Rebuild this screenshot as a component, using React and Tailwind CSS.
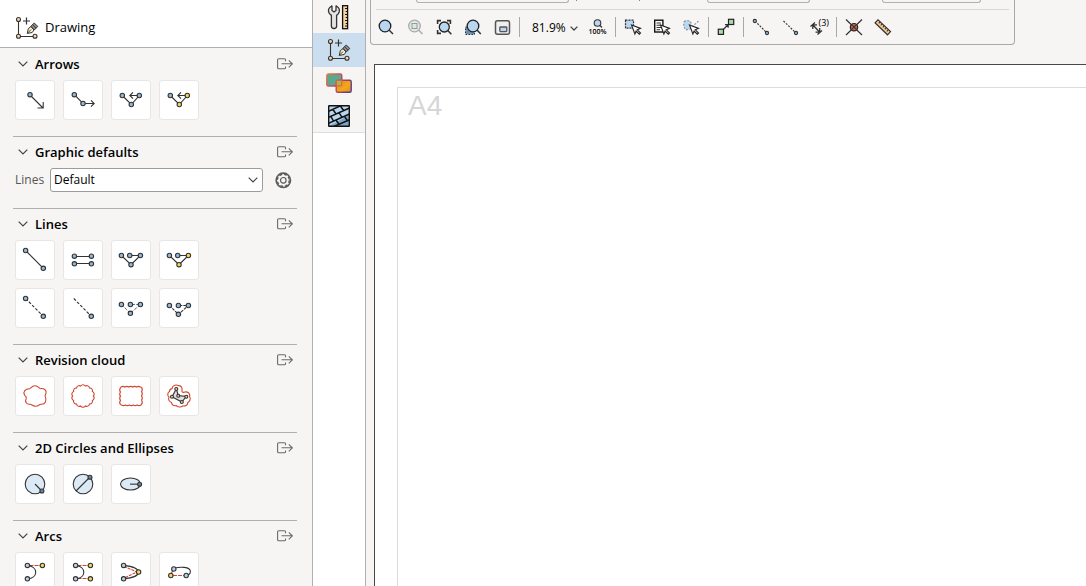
import React, { useState } from 'react';

const BLUE = '#8fb9dd';
const YELLOW = '#f5d65c';
const INK = '#333333';
const RED = '#d0452f';

function Node({ x, y, fill = BLUE, r = 2.2 }) {
    return <circle cx={x} cy={y} r={r} fill={fill} stroke={INK} strokeWidth="1.1" />;
}

function Stroke({ d, dash, color = INK, width = 1.1 }) {
    return <path d={d} fill="none" stroke={color} strokeWidth={width} strokeDasharray={dash} />;
}

// closed outline made of small outward bumps between the given points
function scallop(points, r) {
    const [first, ...rest] = points;
    const arcs = [...rest, first].map(([x, y]) => `A${r} ${r} 0 0 1 ${x.toFixed(2)} ${y.toFixed(2)}`);
    return `M${first[0].toFixed(2)} ${first[1].toFixed(2)}${arcs.join('')}Z`;
}

const ringPoints = Array.from({ length: 14 }, (_, i) => {
    const a = (i / 14) * Math.PI * 2;
    return [20 + 10.4 * Math.cos(a), 20 + 10.2 * Math.sin(a)];
});

const squarePoints = [
    ...[0, 1, 2, 3, 4, 5].map((i) => [10 + i * 3.9, 11]),
    ...[0, 1, 2, 3, 4].map((i) => [30.5, 11.4 + i * 4.2]),
    ...[0, 1, 2, 3, 4, 5].map((i) => [30 - i * 3.9, 29]),
    ...[0, 1, 2, 3, 4].map((i) => [9.5, 28.6 - i * 4.2]),
];

const tools = {
    arrow: (
        <>
            <Stroke d="M15 15L28 28M22.5 28H28.2V22" />
            <Node x={15} y={14.7} />
        </>
    ),
    arrowBent: (
        <>
            <Stroke d="M11.3 14.7L20 23.5H31M28 20.3L31.2 23.5L28 26.7" />
            <Node x={11.3} y={14.7} />
            <Node x={20} y={23.5} />
        </>
    ),
    arrowPoly: (
        <>
            <Stroke d="M11.3 15.5L20.3 24.5L28.3 15.5H19M22 12.3L18.8 15.5L22 18.7" />
            <Node x={11.3} y={15.5} />
            <Node x={20.3} y={24.5} />
            <Node x={28.3} y={15.5} />
        </>
    ),
    arrowPolyFree: (
        <>
            <Stroke d="M11.3 15.5L20.3 24.5L28.3 15.5H19M22 12.3L18.8 15.5L22 18.7" />
            <Node x={11.3} y={15.5} />
            <Node x={20.3} y={24.5} fill={YELLOW} />
            <Node x={28.3} y={15.5} fill={YELLOW} />
        </>
    ),
    line: (
        <>
            <Stroke d="M10.6 10.5L28.3 28.3" />
            <Node x={10.6} y={10.5} />
            <Node x={28.3} y={28.3} />
        </>
    ),
    parallel: (
        <>
            <Stroke d="M11.4 16.5H28.4M11.4 23.5H28.4" />
            <Node x={11.4} y={16.2} />
            <Node x={28.4} y={16.2} />
            <Node x={11.4} y={23.8} />
            <Node x={28.4} y={23.8} />
        </>
    ),
    polyline: (
        <>
            <Stroke d="M10.4 15.5L20 24.7L29.4 15.5H18.7" />
            <Node x={10.4} y={15.5} />
            <Node x={18.7} y={15.5} />
            <Node x={29.4} y={15.5} />
            <Node x={20} y={24.7} />
        </>
    ),
    polylineFree: (
        <>
            <Stroke d="M10.4 15.5L20 24.7L29.4 15.5H18.7" />
            <Node x={10.4} y={15.5} />
            <Node x={18.7} y={15.5} />
            <Node x={29.4} y={15.5} fill={YELLOW} />
            <Node x={20} y={24.7} fill={YELLOW} />
        </>
    ),
    dashed: (
        <>
            <Stroke d="M10.6 10.5L28.3 28.3" dash="3 1.6" />
            <Node x={10.6} y={10.5} />
            <Node x={28.3} y={28.3} />
        </>
    ),
    dashedOpen: (
        <>
            <Stroke d="M10.8 10.5L28.3 28.3" dash="3 1.6" />
            <Node x={28.3} y={28.3} />
        </>
    ),
    dashedPoly: (
        <>
            <Stroke d="M10.4 16.5L19.4 25.3L29.4 16.5H19.4" dash="3 1.5" width={0.8} />
            <Node x={10.4} y={16.5} />
            <Node x={19.4} y={16.5} />
            <Node x={29.4} y={16.5} />
            <Node x={19.4} y={25.3} />
        </>
    ),
    dashedPolyDark: (
        <>
            <Stroke d="M10.4 17.5L19.4 26.3L29.4 17.5H19.4" dash="3 1" />
            <Node x={10.4} y={17.5} />
            <Node x={19.4} y={17.5} />
            <Node x={29.4} y={17.5} />
            <Node x={19.4} y={26.3} />
        </>
    ),
    cloud: (
        <Stroke
            color={RED}
            d="M14.6 12.7C16 12.6 16.6 9.7 20 9.7C23.4 9.7 24 12.6 25.4 12.7C28.5 12 32 14 31 17.4C30.6 19 29.8 19.2 30.2 20.4C32 24.5 30.5 28.6 26 28.2C24.4 28 23.6 30.2 20.4 30.2C17.4 30.2 16.6 28 15 28.2C11 28.6 9.8 25 11.2 22.4C11.8 20.8 10.6 20.6 9.6 19.2C7.6 16 10.4 12.6 14.6 12.7Z"
        />
    ),
    cloudCircle: <Stroke color={RED} d={scallop(ringPoints, 2.7)} />,
    cloudRect: <Stroke color={RED} d={scallop(squarePoints, 3.4)} />,
    cloudPoly: (
        <>
            <Stroke
                color={RED}
                d="M13 12.6C13.4 9.2 17.5 8.2 19.4 9.6C22 9.6 23.6 11.5 23 14.2C22.7 15.8 23.4 16.7 25 16.2C28.5 15 31.6 17.4 30.6 20.5C32 23 30.8 25.4 29 26.4C28.5 29.4 25.8 30.6 23.8 29.8C22 31.6 18.6 31.2 17.2 29.6C14.6 30 12.8 28.4 12.4 26.4C9.8 25.4 9 23 10 21.2C8 19.4 8.6 16.6 10.4 15.6C10.6 13.8 11.6 12.8 13 12.6Z"
            />
            <path d="M17.3 13L19.3 19.5L27.3 20.5L22.8 26L13 20.8Z" fill="#dedede" stroke={INK} strokeWidth="1.1" />
            <Node x={17.3} y={13} r={1.5} fill="#f8c98e" />
            <Node x={13} y={20.8} r={1.5} fill="#f8c98e" />
            <Node x={19.3} y={19.7} r={1.5} fill="#f8c98e" />
            <Node x={27.3} y={20.7} r={1.5} fill="#f8c98e" />
            <Node x={22.8} y={26} r={1.5} fill="#f8c98e" />
        </>
    ),
    circleRadius: (
        <>
            <circle cx="20" cy="20" r="9.8" fill="#dceaf6" stroke={INK} strokeWidth="1.1" />
            <Stroke d="M20 20L26.8 27" />
            <Node x={26.9} y={27} r={2} fill="#5f86ab" />
        </>
    ),
    circleDiameter: (
        <>
            <circle cx="20" cy="20" r="9.8" fill="#dceaf6" stroke={INK} strokeWidth="1.1" />
            <Stroke d="M13 27L27 13" />
            <Node x={27} y={13.2} r={2} fill="#5f86ab" />
        </>
    ),
    ellipse: (
        <>
            <ellipse cx="19.5" cy="20" rx="10" ry="6" fill="#dceaf6" stroke={INK} strokeWidth="1.1" />
            <Stroke d="M19 20.2H28" color="#6b6b6b" width={1.6} />
            <Node x={28.6} y={20.2} r={2} fill="#5f86ab" />
        </>
    ),
    arcTangent: (
        <>
            <Stroke d="M14.5 13.5H26" color={RED} dash="4 1" />
            <Stroke d="M12.4 13.4C23.5 14.5 23.5 26 12.4 26.8" />
            <Node x={12.4} y={13.4} fill="#b4d2ea" />
            <Node x={27.4} y={13.4} fill={YELLOW} />
            <Node x={12.4} y={26.8} fill="#b4d2ea" />
        </>
    ),
    arcTangents: (
        <>
            <Stroke d="M14.5 13.5H26M14.5 26.5H26" color={RED} dash="4 1" />
            <Stroke d="M12.6 13.4C23.5 14.5 23.5 26 12.6 26.8" />
            <Node x={12.6} y={13.4} fill="#b4d2ea" />
            <Node x={27.4} y={13.4} fill={YELLOW} />
            <Node x={12.6} y={26.8} fill="#b4d2ea" />
            <Node x={27.4} y={26.8} fill={YELLOW} />
        </>
    ),
    arcApex: (
        <>
            <Stroke d="M13 14.5L26 20L13 26" color={RED} dash="3 1" />
            <Stroke d="M12.6 13.4C32.5 15.5 32.5 25 12.6 26.8" />
            <Node x={12.6} y={13.4} fill="#b4d2ea" />
            <Node x={27.6} y={20} fill={YELLOW} />
            <Node x={12.6} y={26.8} fill="#b4d2ea" />
        </>
    ),
    arcThree: (
        <>
            <Stroke d="M14 23.5H25" color={RED} dash="4 1" />
            <Stroke d="M12 22L14 18" color={RED} />
            <Stroke d="M14.8 16.6C21 14.2 31.3 14.8 31.4 19.5C31.4 21.5 29.8 23 27.2 23.5" />
            <Node x={14.8} y={17} fill="#b4d2ea" />
            <Node x={11.8} y={23.5} fill={YELLOW} />
            <Node x={27.2} y={23.5} fill="#b4d2ea" />
        </>
    ),
};

const sections = [
    {
        title: 'Arrows',
        items: [
            ['arrow', 'Arrow'],
            ['arrowBent', 'Bent arrow'],
            ['arrowPoly', 'Polyline arrow'],
            ['arrowPolyFree', 'Free polyline arrow'],
        ],
    },
    { title: 'Graphic defaults', select: true },
    {
        title: 'Lines',
        items: [
            ['line', 'Line'],
            ['parallel', 'Parallel lines'],
            ['polyline', 'Polyline'],
            ['polylineFree', 'Free polyline'],
            ['dashed', 'Construction line'],
            ['dashedOpen', 'Open construction line'],
            ['dashedPoly', 'Dashed polyline'],
            ['dashedPolyDark', 'Construction polyline'],
        ],
    },
    {
        title: 'Revision cloud',
        items: [
            ['cloud', 'Freehand cloud'],
            ['cloudCircle', 'Circular cloud'],
            ['cloudRect', 'Rectangular cloud'],
            ['cloudPoly', 'Polygon cloud'],
        ],
    },
    {
        title: '2D Circles and Ellipses',
        items: [
            ['circleRadius', 'Circle by radius'],
            ['circleDiameter', 'Circle by diameter'],
            ['ellipse', 'Ellipse'],
        ],
    },
    {
        title: 'Arcs',
        items: [
            ['arcTangent', 'Arc by tangent'],
            ['arcTangents', 'Arc by two tangents'],
            ['arcApex', 'Arc by apex'],
            ['arcThree', 'Arc by three points'],
        ],
    },
];

function Chevron() {
    return (
        <svg width="10" height="6" viewBox="0 0 10 6" fill="none" stroke="#444" strokeWidth="1.2">
            <path d="M0.7 0.7L5 5L9.3 0.7" />
        </svg>
    );
}

function ExportIcon() {
    return (
        <svg width="16" height="12" viewBox="0 0 16 12" fill="none" stroke="#6a6a6a" strokeWidth="1.1">
            <path d="M8.5 3.2V1.8Q8.5 0.8 7.5 0.8H1.6Q0.6 0.8 0.6 1.8V9.8Q0.6 10.8 1.6 10.8H7.5Q8.5 10.8 8.5 9.8V8.4" />
            <path d="M4.5 5.8H15M11.8 2.3L15.3 5.8L11.8 9.3" />
        </svg>
    );
}

function DrawingIcon() {
    return (
        <svg width="24" height="24" viewBox="0 0 24 24">
            <Stroke d="M3.5 3.5V20.5H20" />
            <Stroke d="M11.5 1.5V8.5M8 5H15" width={1.2} />
            <Node x={3.5} y={3.5} fill="#fbd7a4" r={2} />
            <Node x={3.5} y={20.3} fill="#fbd7a4" r={2} />
            <Node x={20} y={20.3} fill="#fbd7a4" r={2} />
            <path d="M12.3 17.4L13.3 12.6L16 10.6L19 14L17.2 16.5Z" fill="#f7f0c8" stroke={INK} strokeWidth="1" />
            <path d="M16 10.2L19.2 7L22.8 10.4L19.3 14Z" fill="#8d8d8d" stroke={INK} strokeWidth="1" />
            <path d="M12.3 17.4L16 13.6M17.6 8.6L21 12.2" stroke={INK} strokeWidth="0.9" />
        </svg>
    );
}

function WrenchIcon() {
    return (
        <svg width="24" height="26" viewBox="0 0 24 26">
            <path
                d="M4.4 2.2C4.9 1.6 5 2 5 2.6V6.4L7 8L9 6.4V2.6C9 2 9.1 1.6 9.6 2.2C11.8 3.4 12.8 5.4 12.2 7.8C11.8 9.6 10.8 10.6 9.6 11.4V22.3C9.6 25.2 4.4 25.2 4.4 22.3V11.4C3.2 10.6 2 9.4 1.6 7.8C1.1 5.4 2.2 3.4 4.4 2.2Z"
                fill="#e4e4e4"
                stroke={INK}
                strokeWidth="1.3"
            />
            <rect x="15.6" y="1.7" width="5" height="23" fill="#fbd3a0" stroke="#111" strokeWidth="1.3" />
            <path d="M18 4.5H20.5M18.7 7.5H20.5M18 10.5H20.5M18.7 13.5H20.5M18 16.5H20.5M18.7 19.5H20.5M18 22H20.5" stroke="#111" strokeWidth="1" />
        </svg>
    );
}

function ShapesIcon() {
    return (
        <svg width="26" height="20" viewBox="0 0 26 20">
            <defs>
                <linearGradient id="shapeEdge" x1="0" y1="0" x2="1" y2="0.6">
                    <stop offset="0" stopColor="#ef7d35" />
                    <stop offset="1" stopColor="#b03a76" />
                </linearGradient>
                <linearGradient id="shapeEdgeDark" x1="0" y1="0" x2="1" y2="0.4">
                    <stop offset="0" stopColor="#e4503c" />
                    <stop offset="1" stopColor="#5a3f86" />
                </linearGradient>
                <linearGradient id="shapeFill" x1="0" y1="0" x2="1" y2="1">
                    <stop offset="0" stopColor="#e88324" />
                    <stop offset="0.6" stopColor="#f3a81a" />
                    <stop offset="1" stopColor="#e8862a" />
                </linearGradient>
            </defs>
            <rect x="0.8" y="1" width="15" height="12" rx="1.5" fill="#58a892" stroke="url(#shapeEdge)" strokeWidth="1.4" />
            <rect x="10.2" y="7.2" width="15" height="12" rx="1.5" fill="url(#shapeFill)" stroke="url(#shapeEdgeDark)" strokeWidth="1.4" />
            <rect x="10.4" y="7.4" width="5.3" height="5.4" fill="#9cba5c" stroke="#e4603e" strokeWidth="1" />
        </svg>
    );
}

function HatchIcon() {
    return (
        <svg width="22" height="22" viewBox="0 0 22 22">
            <rect x="0.6" y="0.6" width="20.8" height="20.8" fill="#b9d6ee" />
            <path d="M0 21.5L21.5 10V21.5Z" fill="#7ba6cb" />
            <path
                d="M0 6.5L13 0.5M0 12.5L21.5 3M0 18.5L21.5 9M6 21.5L21.5 14.7M5 4.5L8 9M12.5 1L15.5 5.5M2.8 11.3L5.5 16M11 7.7L14 12.3M8 15L11 19.3M16.5 11.3L19.3 15.5"
                fill="none"
                stroke="#111"
                strokeWidth="1.5"
            />
            <rect x="0.7" y="0.7" width="20.6" height="20.6" rx="0.5" fill="none" stroke="#111" strokeWidth="1.4" />
        </svg>
    );
}

const Cursor = ({ x, y }) => (
    <path
        d="M0 0L9 3.4L5.8 4.8L9 8L7.8 9.2L4.6 6L3.4 9Z"
        transform={`translate(${x} ${y})`}
        fill="#fff"
        stroke="#222"
        strokeWidth="1.1"
    />
);

// toolbar glyphs, all drawn on a 20x20 grid
const toolbarIcons = {
    zoom: (
        <>
            <circle cx="9" cy="9" r="5.8" fill="#b9d7f0" stroke="#222" strokeWidth="1.3" />
            <Stroke d="M13 13L17 17" width={1.5} />
        </>
    ),
    zoomObject: (
        <>
            <circle cx="9.5" cy="9" r="5.8" fill="#dfe8ef" stroke="#aaa" strokeWidth="1.3" />
            <Stroke d="M13.5 13L17.5 17" color="#aaa" width={1.5} />
            <rect x="7" y="6.5" width="5" height="5" fill="#dcebd0" stroke="#999" strokeWidth="1" />
        </>
    ),
    zoomFit: (
        <>
            <Stroke d="M3.6 7V3.6H7M13 3.6H16.4V7M3.6 13V16.4H7" width={1.6} />
            <circle cx="10.3" cy="10" r="5" fill="#b9d7f0" stroke="#222" strokeWidth="1.3" />
            <Stroke d="M13.7 13.5L17.4 17.2" width={1.6} />
        </>
    ),
    zoomSelection: (
        <>
            <rect x="2.5" y="10" width="9" height="7.5" fill="#6b8fb0" stroke="#333" strokeWidth="1" strokeDasharray="1.5 1.5" />
            <circle cx="10" cy="9" r="5.8" fill="#b9d7f0" stroke="#222" strokeWidth="1.3" />
            <Stroke d="M14 13L17.8 17" width={1.5} />
        </>
    ),
    overview: (
        <>
            <rect x="3.5" y="3.8" width="14" height="13.4" rx="2" fill="#efefef" stroke="#555" strokeWidth="1.5" />
            <rect x="7.8" y="10" width="7" height="4.6" rx="0.8" fill="#b9d7f0" stroke="#555" strokeWidth="1.3" />
        </>
    ),
    selectBox: (
        <>
            <rect x="2.5" y="3.2" width="8" height="8" fill="#b9d7f0" stroke="#333" strokeWidth="1.2" strokeDasharray="2 1" />
            <Cursor x={8.5} y={8} />
        </>
    ),
    selectText: (
        <>
            <rect x="2.7" y="3.2" width="8.2" height="11.8" fill="#fff" stroke="#111" strokeWidth="1.4" />
            <Stroke d="M4.5 6H9M4.5 8.3H9M4.5 10.5H9M4.5 12.8H8" />
            <Cursor x={8.5} y={8} />
        </>
    ),
    selectFilter: (
        <>
            <path d="M3 4.5Q7 2.5 10 5L9.5 12L5 13Q2 10 3 4.5Z" fill="#b9d7f0" stroke="#777" strokeWidth="0.9" strokeDasharray="2 1.4" />
            <Stroke d="M11 10L17.5 4" color="#888" dash="2 1.4" />
            <Cursor x={8.5} y={8} />
        </>
    ),
    link: (
        <>
            <Stroke d="M7.5 12.2L12 7.8M9 7.6H12.2V10.8" width={1.2} />
            <rect x="2.3" y="12.2" width="5.2" height="5.2" fill="#a9dba3" stroke="#222" strokeWidth="1.2" />
            <rect x="12.5" y="2.3" width="5.2" height="5.2" fill="#a9dba3" stroke="#222" strokeWidth="1.2" />
        </>
    ),
    segment: (
        <>
            <Stroke d="M4 4L16 16" dash="2 1.3" />
            <Node x={3.8} y={4} r={1.6} />
            <Node x={16} y={16} r={1.6} />
        </>
    ),
    ray: (
        <>
            <Stroke d="M3.5 4L16 16" dash="2 1.3" />
            <Node x={16} y={16} r={1.6} />
        </>
    ),
    cross: (
        <>
            <Stroke d="M2 2.5L18 18M18 2.5L2 18" width={1.2} />
            <circle cx="10" cy="10.2" r="3.7" fill="#c9674e" stroke="#222" strokeWidth="1.2" />
            <Stroke d="M7.5 7.7L12.5 12.7M12.5 7.7L7.5 12.7" />
        </>
    ),
    measure: (
        <>
            <path d="M2 5.8L5 2.8L17.5 14.6L14.5 17.8Z" fill="#fbcb92" stroke="#333" strokeWidth="1.2" />
            <Stroke d="M7 5L5.8 6.4M9 7L7.8 8.4M11 9L9.8 10.4M13 11L11.8 12.4M15 13L13.8 14.4" />
        </>
    ),
};

function ToolbarButton({ icon, label }) {
    return (
        <button aria-label={label} className="flex h-7 w-[29px] items-center justify-center hover:bg-gray-200">
            <svg width="20" height="20" viewBox="0 0 20 20">
                {toolbarIcons[icon]}
            </svg>
        </button>
    );
}

function Divider() {
    return <span className="mr-[2px] ml-[3px] h-5 w-px bg-[#a8a8a8]" />;
}

function Section({ title, items, select, first }) {
    const [open, setOpen] = useState(true);

    return (
        <section className={`mr-[15px] ml-[13px] border-t pb-4 ${first ? 'border-transparent' : 'border-[#b0b0b0]'}`}>
            <div className="mb-[2px] flex h-[29px] items-center justify-between pr-1 pl-[5px]">
                <button className="flex items-center gap-[7px]" onClick={() => setOpen(!open)} aria-expanded={open}>
                    <Chevron />
                    <span className="text-[13px] leading-5 font-semibold">{title}</span>
                </button>
                <button aria-label={`Detach ${title}`}>
                    <ExportIcon />
                </button>
            </div>

            {open && select && (
                <div className="flex items-center pl-[2px]">
                    <label htmlFor="lines" className="w-[35px] text-[12px] text-[#555]">
                        Lines
                    </label>
                    <div className="relative flex-1">
                        <select
                            id="lines"
                            className="block h-6 w-full appearance-none rounded-[3px] border border-[#9c9c9c] bg-white pl-[3px] text-[12px] text-black"
                        >
                            <option>Default</option>
                        </select>
                        <span className="pointer-events-none absolute top-[9px] right-[5px]">
                            <Chevron />
                        </span>
                    </div>
                    <button aria-label="Line settings" className="mr-[5px] ml-3">
                        <svg width="17" height="17" viewBox="0 0 17 17" fill="none" stroke="#5a5a5a">
                            <circle cx="8.3" cy="8.3" r="7.2" strokeWidth="1.6" />
                            <circle cx="8.3" cy="8.3" r="6" strokeWidth="1.4" strokeDasharray="2.8 1.91" />
                            <circle cx="8.3" cy="8.3" r="2.8" strokeWidth="1.2" />
                        </svg>
                    </button>
                </div>
            )}

            {open && items && (
                <div className="flex max-w-[200px] flex-wrap gap-2 pl-[2px]">
                    {items.map(([icon, label]) => (
                        <button
                            key={icon}
                            aria-label={label}
                            className="h-10 w-10 rounded-[3px] border border-[#e6e6e6] bg-white hover:border-gray-400"
                        >
                            <svg width="38" height="38" viewBox="1 1 38 38">
                                {tools[icon]}
                            </svg>
                        </button>
                    ))}
                </div>
            )}
        </section>
    );
}

function Sidebar() {
    return (
        <aside className="flex w-[312px] shrink-0 flex-col overflow-hidden">
            <header className="flex h-12 shrink-0 items-center gap-[6px] border-b border-[#b0b0b0] bg-white pt-2 pl-[15px]">
                <DrawingIcon />
                <h1 className="text-[13px]">Drawing</h1>
            </header>
            {sections.map((section, i) => (
                <Section key={section.title} {...section} first={i === 0} />
            ))}
        </aside>
    );
}

function TabStrip() {
    return (
        <nav className="w-[54px] shrink-0 border-x border-[#b0b0b0] bg-white">
            <div className="flex flex-col border-b border-[#dedede] bg-[#f6f5f4]">
                <button aria-label="Settings" className="flex h-[33px] items-center justify-center">
                    <WrenchIcon />
                </button>
                <button aria-label="Drawing" aria-pressed="true" className="flex h-[34px] items-center justify-center bg-[#cbdeef]">
                    <DrawingIcon />
                </button>
                <button aria-label="Shapes" className="flex h-8 items-center justify-center">
                    <ShapesIcon />
                </button>
                <button aria-label="Hatching" className="flex h-[33px] items-center justify-center">
                    <HatchIcon />
                </button>
            </div>
        </nav>
    );
}

function Toolbar() {
    return (
        <div className="ml-[4px] w-[645px] max-w-full rounded-b-[4px] border border-t-0 border-[#a8a8a8]">
            {/* bottom edge of the row above */}
            <div className="mx-[5px] flex h-[10px] items-start border-b border-[#d8d8d8] pl-10">
                <span className="h-[3px] w-[153px] rounded-b-[3px] border border-t-0 border-[#b0b0b0]" />
                <span className="ml-[7px] h-px w-px bg-[#888]" />
                <span className="ml-[62px] h-px w-px bg-[#888]" />
                <span className="ml-[67px] h-[3px] w-[103px] rounded-b-[3px] border border-t-0 border-[#b0b0b0]" />
                <span className="ml-[72px] h-[3px] w-[99px] rounded-b-[3px] border border-t-0 border-[#b0b0b0]" />
            </div>
            <div className="flex h-[34px] items-center">
                <ToolbarButton icon="zoom" label="Zoom" />
                <ToolbarButton icon="zoomObject" label="Zoom to object" />
                <ToolbarButton icon="zoomFit" label="Fit page" />
                <ToolbarButton icon="zoomSelection" label="Zoom to selection" />
                <ToolbarButton icon="overview" label="Overview" />
                <Divider />
                <button className="flex h-7 w-[61px] items-center gap-1 pt-[2px] pl-[10px] text-[12px]">
                    81.9%
                    <svg width="8" height="5" viewBox="0 0 8 5" fill="none" stroke="#444" strokeWidth="1.3">
                        <path d="M0.6 0.6L4 4L7.4 0.6" />
                    </svg>
                </button>
                <button className="flex h-7 w-[29px] flex-col items-center justify-center" aria-label="Zoom to 100%">
                    <svg width="12" height="9" viewBox="0 0 12 9">
                        <circle cx="5.5" cy="4" r="3.3" fill="#b9d7f0" stroke="#333" strokeWidth="1.1" />
                        <path d="M8 6.5L10 8.5" stroke="#333" strokeWidth="1.2" />
                    </svg>
                    <span className="text-[7px] leading-[8px] font-semibold">100%</span>
                </button>
                <Divider />
                <ToolbarButton icon="selectBox" label="Select area" />
                <ToolbarButton icon="selectText" label="Select text" />
                <ToolbarButton icon="selectFilter" label="Select by shape" />
                <Divider />
                <ToolbarButton icon="link" label="Link" />
                <Divider />
                <ToolbarButton icon="segment" label="Segment" />
                <ToolbarButton icon="ray" label="Ray" />
                <button className="relative flex h-7 w-[29px] items-center justify-center" aria-label="Dimension count">
                    <svg width="20" height="20" viewBox="0 0 20 20">
                        <Stroke d="M4 8L10.5 15M1.5 9.5L6 5.5M8.5 17.5L13 13.5M3.8 12V7.8H8M10.7 11V15.2H6.5" width={1.3} />
                    </svg>
                    <span className="absolute top-[5px] right-[4px] text-[9px] leading-[10px]">(3)</span>
                </button>
                <Divider />
                <ToolbarButton icon="cross" label="Intersection" />
                <ToolbarButton icon="measure" label="Measure" />
            </div>
        </div>
    );
}

function App() {
    return (
        <div className="flex h-screen overflow-hidden bg-[#f6f5f4] font-['Open_Sans','Noto_Sans',sans-serif] text-black">
            <Sidebar />
            <TabStrip />
            <main className="flex min-w-0 flex-1 flex-col">
                <Toolbar />
                <div className="mt-[19px] ml-2 flex flex-1 border-t border-l border-[#484848] bg-white pt-[22px] pl-[22px]">
                    <div className="flex-1 border-t border-l border-[#dcdcdc] pt-[3px] pl-[10px]">
                        <span className="font-['Liberation_Sans',Arial,sans-serif] text-[28px] leading-[30px] text-[#d6d6d6]">A4</span>
                    </div>
                </div>
            </main>
        </div>
    );
}

export default App;
